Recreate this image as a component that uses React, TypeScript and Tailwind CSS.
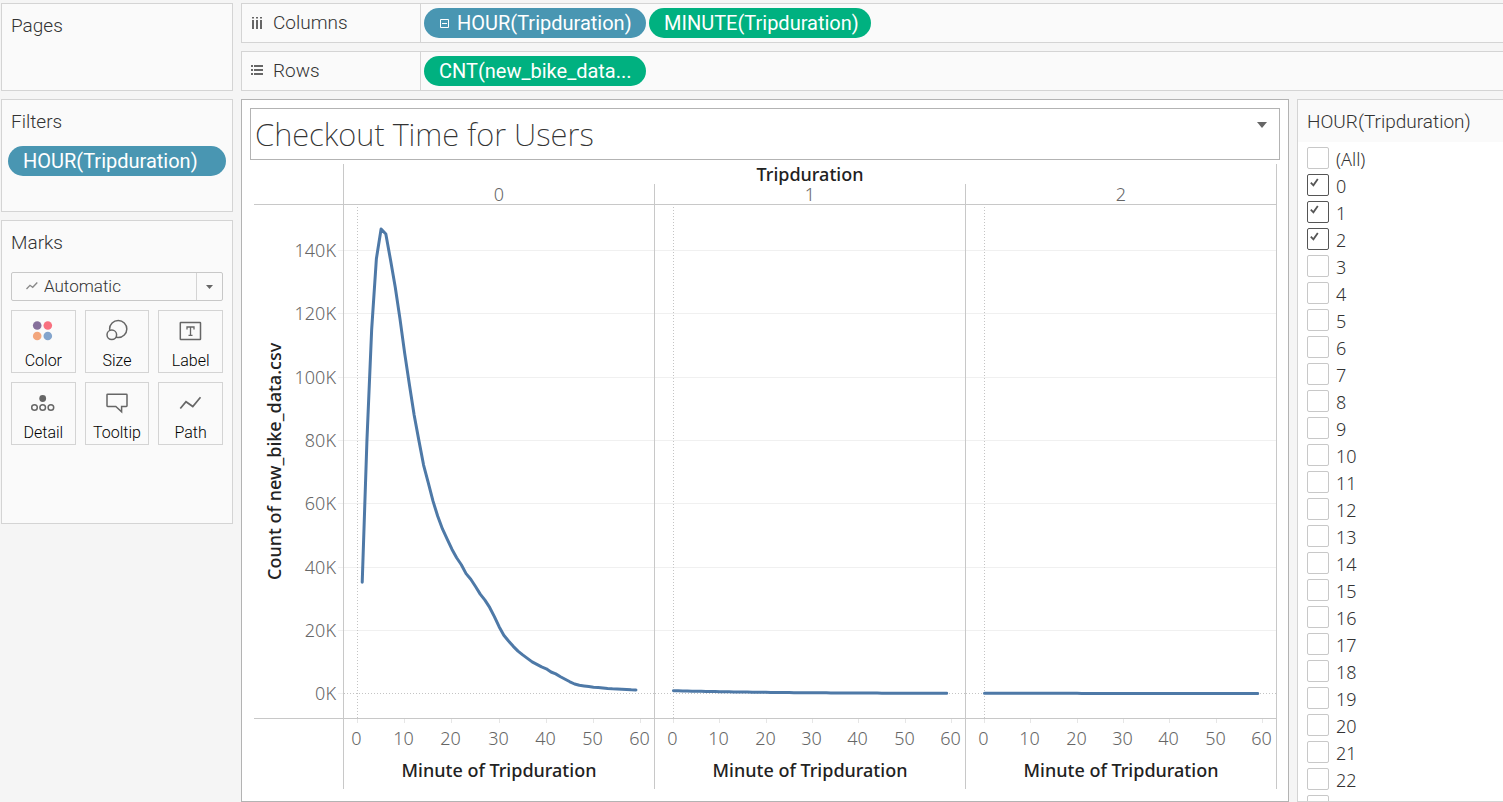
import type { ReactNode } from "react";

type Series = { name: string; start: number; zero: number; step: number; values: number[] };

const PLOT_W = 310;
const PLOT_H = 513;
const GRID = [45.5, 108.5, 172.5, 235.5, 298.5, 362.5, 425.5, 488.5];
const Y_LABELS = ["140K", "120K", "100K", "80K", "60K", "40K", "20K", "0K"];
const MINUTES = [0, 10, 20, 30, 40, 50, 60];

const SERIES: Series[] = [
  {
    name: "0",
    start: 1,
    zero: 13.5,
    step: 4.72,
    values: [
      35.2, 80, 115, 137.4, 146.8, 145.2, 137, 128.4, 118.4, 107.5, 97.6, 88, 80, 72.2, 66.6, 60.8, 56, 52, 48.8,
      45.6, 42.9, 40.7, 37.9, 36.1, 33.8, 31.4, 29.5, 27.2, 24.3, 21.1, 18.4, 16.6, 14.9, 13.4, 12.2, 11.1, 10,
      9.2, 8.4, 7.8, 6.8, 6.2, 5.3, 4.5, 3.7, 3, 2.6, 2.4, 2.2, 2, 1.9, 1.75, 1.6, 1.5, 1.45, 1.35, 1.25, 1.15, 1.1,
    ],
  },
  {
    name: "1",
    start: 0,
    zero: 18.5,
    step: 4.63,
    values: Array.from({ length: 60 }, (_, m) => 0.9 * Math.exp(-m / 22)),
  },
  { name: "2", start: 0, zero: 18.5, step: 4.63, values: Array.from({ length: 60 }, (_, m) => 0.06 - m * 0.001) },
];

const HOURS = ["(All)", ...Array.from({ length: 24 }, (_, i) => String(i))];
const CHECKED = ["0", "1", "2"];

const px = (v: number) => `${(v / PLOT_W) * 100}%`;
const py = (v: number) => `${(v / PLOT_H) * 100}%`;

function Card({ title, className, children }: { title: string; className: string; children?: ReactNode }) {
  return (
    <section className={`border border-[#d4d4d4] bg-[#fafafa] ${className}`}>
      <h2 className="h-[42px] px-[9px] text-[19px] leading-[44px] font-light text-[#333]">{title}</h2>
      {children}
    </section>
  );
}

function Pill({ tone, children }: { tone: "blue" | "green"; children: ReactNode }) {
  return (
    <button
      type="button"
      className={`flex h-[30px] w-full items-center rounded-full px-[15px] text-[20px] leading-none whitespace-nowrap text-white ${
        tone === "blue" ? "bg-[#4996b2]" : "bg-[#00b180]"
      }`}
    >
      {children}
    </button>
  );
}

function Shelf({ label, icon, children }: { label: string; icon: ReactNode; children: ReactNode }) {
  return (
    <section className="flex h-10 border border-r-0 border-[#d4d4d4] bg-[#fafafa]">
      <div className="flex w-[179px] shrink-0 items-center gap-[10px] border-r border-[#d4d4d4] pl-[9px]">
        {icon}
        <h2 className="text-[19px] leading-[38px] font-light text-[#333]">{label}</h2>
      </div>
      <div className="flex items-center gap-[3px] pl-[3px]">{children}</div>
    </section>
  );
}

function MarkButton({ label, children }: { label: string; children: ReactNode }) {
  return (
    <button
      type="button"
      className="flex h-[63px] flex-col items-center border border-[#d4d4d4] bg-[#fafafa] pt-2 text-[16px] leading-5 font-light text-black"
    >
      <svg width="24" height="24" viewBox="0 0 24 24" fill="none" stroke="#666" strokeWidth="1.5" aria-hidden="true">
        {children}
      </svg>
      <span className="mt-2">{label}</span>
    </button>
  );
}

function Plot({ series }: { series: Series }) {
  const points = series.values
    .map((v, i) => `${series.zero + (series.start + i) * series.step},${488.5 - v * 3.164}`)
    .join(" ");
  return (
    <svg className="block h-0 min-h-0 w-full flex-1">
      {GRID.slice(0, -1).map((y) => (
        <line key={y} x1="0" x2="100%" y1={py(y)} y2={py(y)} stroke="#f0f0f0" />
      ))}
      <line x1="0" x2="100%" y1={py(488.5)} y2={py(488.5)} stroke="#c4c4c4" strokeDasharray="1 2" />
      <line x1={px(series.zero)} x2={px(series.zero)} y1="2" y2="100%" stroke="#c4c4c4" strokeDasharray="1 2" />
      <svg width="100%" height="100%" viewBox={`0 0 ${PLOT_W} ${PLOT_H}`} preserveAspectRatio="none">
        <polyline
          points={points}
          fill="none"
          stroke="#4e79a7"
          strokeWidth="3"
          strokeLinecap="round"
          strokeLinejoin="round"
          vectorEffect="non-scaling-stroke"
        />
      </svg>
    </svg>
  );
}

function MinuteAxis({ series }: { series: Series }) {
  return (
    <div className="h-[71px] border-t border-[#c8c8c8] text-center">
      <svg className="block h-[35px] w-full overflow-visible">
        {MINUTES.map((m) => (
          <g key={m}>
            <line
              x1={px(Math.floor(series.zero + m * series.step) + 0.5)}
              x2={px(Math.floor(series.zero + m * series.step) + 0.5)}
              y1="0"
              y2="4"
              stroke="#e6e6e6"
            />
            <text
              x={px(Math.floor(series.zero + m * series.step) - 0.5)}
              y="26"
              textAnchor="middle"
              className="fill-[#666] text-[18px] font-light"
            >
              {m}
            </text>
          </g>
        ))}
      </svg>
      <h4 className="text-[18px] leading-8 font-medium text-[#222]">Minute of Tripduration</h4>
    </div>
  );
}

function Chart() {
  return (
    <div className="mt-1 mr-[3px] ml-1 flex min-h-0 flex-1 font-['Noto_Sans','Open_Sans',sans-serif]">
      <div className="flex w-[89px] shrink-0 flex-col">
        <div className="h-[41px] border-b border-[#c8c8c8]" />
        <div className="flex min-h-0 flex-1">
          <h4 className="flex w-10 rotate-180 items-center justify-center text-[18px] leading-10 font-medium whitespace-nowrap text-[#222] [writing-mode:vertical-rl]">
            Count of new_bike_data.csv
          </h4>
          <svg className="block h-full w-[49px] overflow-visible">
            {GRID.map((y, i) => (
              <g key={y}>
                <line x1="44" x2="49" y1={py(y)} y2={py(y)} stroke="#f0f0f0" />
                <text x="42" y={py(y + 6)} textAnchor="end" className="fill-[#666] text-[18px] font-light">
                  {Y_LABELS[i]}
                </text>
              </g>
            ))}
          </svg>
        </div>
        <div className="h-[71px] border-t border-[#c8c8c8]" />
      </div>
      <div className="flex flex-1 flex-col border-r border-[#c8c8c8]">
        <h3 className="h-5 border-l border-[#c8c8c8] text-center text-[18px] leading-5 font-medium text-[#222]">
          Tripduration
        </h3>
        <div className="grid min-h-0 flex-1 grid-cols-3">
          {SERIES.map((s) => (
            <div key={s.name} className="flex min-h-0 flex-col border-l border-[#c8c8c8]">
              <div className="h-[21px] border-b border-[#c8c8c8] text-center text-[18px] leading-5 font-light text-[#666]">
                {s.name}
              </div>
              <Plot series={s} />
              <MinuteAxis series={s} />
            </div>
          ))}
        </div>
      </div>
    </div>
  );
}

export default function App() {
  return (
    <div className="flex h-screen gap-2 overflow-hidden bg-[#f5f5f5] pt-[3px] pl-px font-['Roboto','Open_Sans',sans-serif]">
      <aside className="flex w-[232px] shrink-0 flex-col gap-2">
        <Card title="Pages" className="h-[88px]" />
        <Card title="Filters" className="h-[113px]">
          <div className="px-[6px] pt-1">
            <Pill tone="blue">HOUR(Tripduration)</Pill>
          </div>
        </Card>
        <Card title="Marks" className="h-[304px]">
          <div className="px-[9px] pt-[9px]">
            <div className="relative">
              <select
                aria-label="Mark type"
                className="h-[29px] w-full appearance-none rounded-[2px] border border-[#c8c8c8] bg-[#fafafa] pl-8 text-[17px] leading-none font-light text-[#333]"
              >
                <option>Automatic</option>
              </select>
              <svg className="pointer-events-none absolute top-2 left-3.5" width="14" height="12" viewBox="0 0 14 12" aria-hidden="true">
                <path d="M1.5 9 5 5.3 7.7 7.3 12.3 2.5" fill="none" stroke="#888" strokeWidth="1.3" />
              </svg>
              <span className="pointer-events-none absolute top-px right-0 flex h-[27px] w-[27px] items-center justify-center border-l border-[#d4d4d4]">
                <svg width="8" height="4" viewBox="0 0 8 4" aria-hidden="true">
                  <path d="M0 0h7L3.5 4z" fill="#666" />
                </svg>
              </span>
            </div>
            <div className="mt-[9px] grid grid-cols-3 gap-[9px]">
              <MarkButton label="Color">
                <g stroke="none">
                  <circle cx="6.2" cy="6.5" r="4.3" fill="#86709b" />
                  <circle cx="16.8" cy="6.5" r="4.3" fill="#f8707f" />
                  <circle cx="6.2" cy="17" r="4.3" fill="#f3a67c" />
                  <circle cx="16.8" cy="17" r="4.3" fill="#83a4cc" />
                </g>
              </MarkButton>
              <MarkButton label="Size">
                <circle cx="13.2" cy="10" r="8.6" />
                <circle cx="6.8" cy="15.8" r="4.8" fill="#fafafa" />
              </MarkButton>
              <MarkButton label="Label">
                <rect x="1.3" y="3.5" width="20.2" height="17" rx="0.5" />
                <path d="M8 10.5V8h7v2.5M11.5 8v8.3M9.5 16.3h4" strokeWidth="1.3" />
              </MarkButton>
              <MarkButton label="Detail">
                <circle cx="11.7" cy="7.5" r="3.4" fill="#666" stroke="none" />
                <circle cx="3.5" cy="16.5" r="2.8" />
                <circle cx="11.7" cy="16.5" r="2.8" />
                <circle cx="19.9" cy="16.5" r="2.8" />
              </MarkButton>
              <MarkButton label="Tooltip">
                <path d="M2.7 3.2h18.6q.7 0 .7.7v10.9q0 .7-.7.7H16.6v5.3L10.8 15.5H2.7q-.7 0-.7-.7V3.9q0-.7.7-.7z" />
              </MarkButton>
              <MarkButton label="Path">
                <path d="M1.3 17.5 7 10.7 13.8 15.5 21.5 6.3" strokeWidth="1.7" />
              </MarkButton>
            </div>
          </div>
        </Card>
      </aside>

      <div className="flex min-w-0 flex-1 flex-col gap-2">
        <Shelf
          label="Columns"
          icon={
            <svg width="12" height="12" viewBox="0 0 12 12" fill="#666" aria-hidden="true">
              <path d="M1 0h2v1.5H1zM5 0h2v1.5H5zM9 0h2v1.5H9zM1 3h2v9H1zM5 3h2v9H5zM9 3h2v9H9z" />
            </svg>
          }
        >
          <div className="w-[222px]">
            <Pill tone="blue">
              <svg className="mr-2 ml-px shrink-0" width="9" height="9" viewBox="0 0 9 9" fill="none" stroke="#fff" aria-hidden="true">
                <path d="M.5.5h8v8h-8zM2 4.5h5" />
              </svg>
              HOUR(Tripduration)
            </Pill>
          </div>
          <div className="w-[222px]">
            <Pill tone="green">MINUTE(Tripduration)</Pill>
          </div>
        </Shelf>
        <Shelf
          label="Rows"
          icon={
            <svg width="12" height="12" viewBox="0 0 12 12" fill="#666" aria-hidden="true">
              <path d="M0 0h2v2H0zM3 0h9v2H3zM0 4h2v2H0zM3 4h9v2H3zM0 8h2v2H0zM3 8h9v2H3z" />
            </svg>
          }
        >
          <div className="w-[222px]">
            <Pill tone="green">CNT(new_bike_data...</Pill>
          </div>
        </Shelf>

        <div className="flex min-h-0 flex-1 gap-2">
          <main className="flex min-w-0 flex-1 flex-col border border-[#b3b3b3] bg-white px-2 pt-2 pb-3">
            <header className="flex h-[52px] shrink-0 items-center justify-between border border-[#b3b3b3] pl-1">
              <h1 className="font-['Noto_Sans','Open_Sans',sans-serif] text-[31px] leading-[50px] font-extralight text-[#333]">
                Checkout Time for Users
              </h1>
              <button type="button" aria-label="Title menu" className="flex h-full w-[34px] justify-center pt-[13px]">
                <svg width="10" height="6" viewBox="0 0 10 6" aria-hidden="true">
                  <path d="M0 0h10L5 6z" fill="#666" />
                </svg>
              </button>
            </header>
            <Chart />
          </main>

          <aside className="w-[206px] shrink-0 overflow-hidden border border-r-0 border-[#d4d4d4] bg-white">
            <h2 className="h-[42px] bg-[#fafafa] px-[9px] text-[19px] leading-[44px] font-light text-[#333]">
              HOUR(Tripduration)
            </h2>
            <ul className="px-[9px] pt-1 font-['Noto_Sans','Open_Sans',sans-serif]">
              {HOURS.map((hour) => (
                <li key={hour} className="h-[27px]">
                  <label className="flex items-start gap-[7px] text-[18px] leading-[27px] font-light text-[#333]">
                    <span className="relative mt-px h-[22px] w-[22px]">
                      <input
                        type="checkbox"
                        defaultChecked={CHECKED.includes(hour)}
                        className="peer block h-full w-full appearance-none rounded-[2px] border border-[#c8c8c8] bg-white checked:border-[#555]"
                      />
                      <svg
                        className="pointer-events-none absolute top-1 left-[3px] hidden peer-checked:block"
                        width="9"
                        height="9"
                        viewBox="0 0 9 9"
                        aria-hidden="true"
                      >
                        <path d="M.8 4.6 3.4 7.3 7.8 1" fill="none" stroke="#555" strokeWidth="1.8" />
                      </svg>
                    </span>
                    {hour}
                  </label>
                </li>
              ))}
            </ul>
          </aside>
        </div>
      </div>
    </div>
  );
}
